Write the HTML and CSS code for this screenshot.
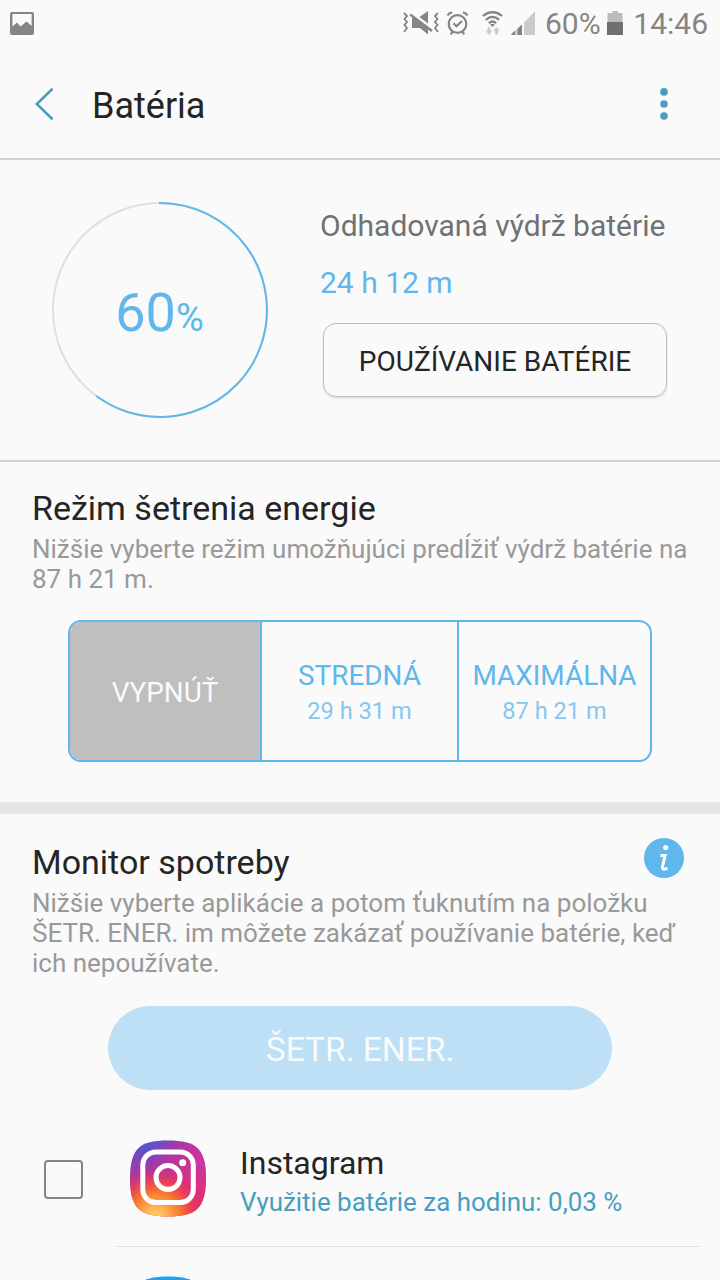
FILE: index.html
```html
<!DOCTYPE html>
<html lang="sk">
<head>
<meta charset="utf-8">
<title>Batéria</title>
<link rel="stylesheet" href="styles.css">
</head>
<body>
<div class="screen">
  <div class="status">
    <svg class="status-picture" width="24" height="23" viewBox="0 0 24 23"><path fill="#858585" fill-rule="evenodd" d="M2 0H22Q24 0 24 2V21Q24 23 22 23H2Q0 23 0 21V2Q0 0 2 0ZM2.400 2V14.500L7 10.500L10.500 14.500L16.600 9.500L21.600 14V2Z"/></svg>
    <svg class="status-icons" width="146" height="26" viewBox="0 0 146 26">
      <g fill="none" stroke="#858585" stroke-width="1.800">
        <path d="M1 2L4 5L1.500 8L4 11L1.500 14L4 17L1 21"/>
        <path d="M35 2L32 5L34.500 8L32 11L34.500 14L32 17L35 21"/>
      </g>
      <path fill="#858585" d="M16.500 6L25 0V12.500ZM9 6.500H11.500L29 19.500L25 18.500V23.500L17 17H9Z"/>
      <path d="M7.200 3.500L29 20" stroke="#858585" stroke-width="2.400"/>
      <g fill="none" stroke="#858585" stroke-width="2.200">
        <circle cx="54.500" cy="13" r="8.800"/>
        <path d="M50.500 12.200L53.500 15.200L59 10"/>
        <path d="M44.500 4.500Q46 1.800 49 1.300M60 1.300Q63 1.800 64.500 4.500M49.500 20.500L47.800 23.500M59.500 20.500L61.200 23.500"/>
      </g>
      <g fill="none" stroke="#858585" stroke-width="2.200">
        <path d="M79.800 5Q89.500 -3 99.200 5"/>
        <path d="M82.800 8.800Q89.500 3 96.200 8.800"/>
        <path d="M85.800 12.200Q89.500 8.800 93.200 12.200"/>
      </g>
      <path fill="#858585" d="M87 13.500Q89.500 11.800 92 13.500L89.500 16Z"/>
      <path fill="#cacaca" d="M84.500 16.500H87.500V20H89.200L86 24L82.800 20H84.500ZM92 23.500V20H90.300L93.500 16L96.700 20H95V23.500Z"/>
      <path fill="#858585" d="M108.300 24V23L112.500 19.200V24ZM115 24V17L119 13.400V24Z"/>
      <path fill="#a8a8a8" d="M113.600 24V18.200L115 17V24Z"/>
      <path fill="#cacaca" d="M121 24V11.500L132 .3V24Z"/>
    </svg>
    <span class="status-percent">60%</span>
    <svg class="status-battery" width="16" height="24" viewBox="0 0 16 24"><path fill="#bbb" d="M5.500 0H11V2H15.500V11H.5V2H5.500Z"/><path fill="#707070" d="M0 11H16V24H0Z"/></svg>
    <span class="status-time">14:46</span>
  </div>

  <header class="header">
    <svg class="back" width="20" height="34" viewBox="0 0 20 34"><path d="M17.500 1.800L1.800 17L17.500 32.200" fill="none" stroke="#479ebf" stroke-width="2.600"/></svg>
    <h1 class="header-title">Batéria</h1>
    <svg class="more" width="8" height="32" viewBox="0 0 8 32" fill="#479ebf"><circle cx="4" cy="3.900" r="3.800"/><circle cx="4" cy="16" r="3.800"/><circle cx="4" cy="28.100" r="3.800"/></svg>
  </header>

  <section class="summary">
    <div class="ring">
      <svg class="ring-arc" width="216" height="216" viewBox="0 0 216 216" fill="none" stroke-width="2">
        <circle cx="108" cy="108" r="107" stroke="#dfdfdf"/>
        <path d="M107 1H108A107 107 0 1 1 44.300 194" stroke="#60b7ec"/>
      </svg>
      <div class="ring-label">60<span class="ring-sign">%</span></div>
    </div>
    <div class="estimate">
      <div class="estimate-label">Odhadovaná výdrž batérie</div>
      <div class="estimate-value">24 h 12 m</div>
      <button class="usage">POUŽÍVANIE BATÉRIE</button>
    </div>
  </section>

  <section class="saving">
    <h2 class="title">Režim šetrenia energie</h2>
    <p class="text">Nižšie vyberte režim umožňujúci predĺžiť výdrž batérie na<br>87 h 21 m.</p>
    <div class="modes">
      <div class="mode mode-off">VYPNÚŤ</div>
      <div class="mode">STREDNÁ<span class="mode-time">29 h 31 m</span></div>
      <div class="mode">MAXIMÁLNA<span class="mode-time">87 h 21 m</span></div>
    </div>
  </section>

  <section class="monitor">
    <div class="monitor-head">
      <h2 class="title">Monitor spotreby</h2>
      <svg class="info" width="40" height="40" viewBox="0 0 40 40"><circle cx="20" cy="20" r="20" fill="#60b7ec"/><circle cx="21.700" cy="9.500" r="2.600" fill="#fff"/><path d="M16.500 17.500H21L18.500 28.500Q18 31.400 20 31.200Q21.800 31 23.300 30" fill="none" stroke="#fff" stroke-width="3"/></svg>
    </div>
    <p class="text">Nižšie vyberte aplikácie a potom ťuknutím na položku<br>ŠETR. ENER. im môžete zakázať používanie batérie, keď<br>ich nepoužívate.</p>
    <button class="save">ŠETR. ENER.</button>
  </section>

  <div class="app">
    <span class="checkbox"></span>
    <svg class="app-icon" width="78" height="78" viewBox="0 0 78 78">
      <defs>
        <linearGradient id="igBase" x1=".25" y1="0" x2=".75" y2="1"><stop offset="0" stop-color="#7048c4"/><stop offset=".35" stop-color="#b0369c"/><stop offset=".65" stop-color="#dd2f72"/><stop offset="1" stop-color="#e03560"/></linearGradient>
        <radialGradient id="igWarm" cx=".34" cy="1" r=".65"><stop offset="0" stop-color="#ffd06a"/><stop offset=".2" stop-color="#fdb456"/><stop offset=".5" stop-color="#f9772d"/><stop offset=".75" stop-color="#ed4250" stop-opacity=".75"/><stop offset="1" stop-color="#d82e75" stop-opacity="0"/></radialGradient>
        <radialGradient id="igCool" cx=".2" cy="0" r=".35"><stop offset="0" stop-color="#485fd4"/><stop offset="1" stop-color="#7048c4" stop-opacity="0"/></radialGradient>
        <radialGradient id="igPink" cx="1" cy=".3" r=".6"><stop offset="0" stop-color="#c837aa"/><stop offset="1" stop-color="#d83080" stop-opacity="0"/></radialGradient>
        <path id="igShape" d="M39 1C67 1 77 9 77 39S67 77 39 77S1 69 1 39S11 1 39 1Z"/>
      </defs>
      <g transform="translate(0 .5)">
        <use href="#igShape" fill="url(#igBase)"/><use href="#igShape" fill="url(#igPink)"/><use href="#igShape" fill="url(#igCool)"/><use href="#igShape" fill="url(#igWarm)"/>
        <g fill="none" stroke="#fff" stroke-width="5"><rect x="13.800" y="12.500" width="50.500" height="50.500" rx="13"/><circle cx="39" cy="38" r="12"/></g>
        <circle cx="53.700" cy="23.300" r="3.500" fill="#fff"/>
      </g>
    </svg>
    <div class="app-info">
      <div class="app-name">Instagram</div>
      <div class="app-usage">Využitie batérie za hodinu: 0,03 %</div>
    </div>
  </div>
  <div class="divider"></div>
  <div class="next-app">
    <svg class="next-icon" width="78" height="78" viewBox="0 0 78 78"><path fill="#1da1f2" d="M39 .5C67 .5 77 8.500 77 38.500S67 77 39 77S1 68.500 1 38.500S11 .5 39 .5Z"/></svg>
  </div>
</div>
</body>
</html>
```

FILE: styles.css
```css
* { box-sizing: border-box; }

body {
  margin: 0;
  background: #fafafa;
  color: #252525;
  font-family: Roboto, "Noto Sans", sans-serif;
}

h1, h2, p { margin: 0; font-weight: 400; }
svg { display: block; flex: none; }
button { font-family: inherit; padding: 0; background: none; }

.screen { width: 720px; height: 1280px; overflow: hidden; }

.status {
  display: flex;
  height: 48px;
  padding: 0 12px 0 10px;
  color: #858585;
  font-size: 30px;
  line-height: 48px;
  white-space: nowrap;
}
.status-picture { margin-top: 12px; }
.status-icons { margin: 11px 0 0 369px; }
.status-percent { width: 58px; margin-left: -4px; }
.status-battery { margin: 11px 0 0 4px; }
.status-time { margin-left: auto; }

.header {
  display: flex;
  align-items: center;
  height: 112px;
  padding: 2px 52px 0 35px;
  border-bottom: 2px solid #d3d3d3;
}
.header-title { flex: 1; padding: 3px 0 0 37px; font-size: 36px; line-height: 44px; }

.summary {
  display: flex;
  height: 302px;
  padding: 42px 53px 0 52px;
  border-bottom: 2px solid #d3d3d3;
}
.ring { display: grid; width: 216px; height: 216px; }
.ring-arc, .ring-label { grid-area: 1 / 1; }
.ring-label {
  padding: 3px 1px 0 0;
  color: #60b7ec;
  font-size: 54px;
  line-height: 216px;
  text-align: center;
}
.ring-sign { font-size: 38px; }
.estimate { width: 347px; margin: 6px 0 0 52px; white-space: nowrap; }
.estimate-label { color: #6f7274; font-size: 30px; line-height: 36px; }
.estimate-value { margin-top: 21px; color: #60b7ec; font-size: 30px; line-height: 36px; }
.usage {
  display: block;
  width: 344px;
  height: 74px;
  margin: 22px 0 0 3px;
  padding-top: 2px;
  border: 1px solid #bdbdbd;
  border-radius: 13px;
  box-shadow: 0 1px 2px rgba(0, 0, 0, .15);
  color: #252525;
  font-size: 28px;
}

.title { font-size: 34px; line-height: 40px; }
.text { color: #999; font-size: 26px; line-height: 30px; white-space: nowrap; }

.saving {
  height: 352px;
  padding: 26px 32px 0;
  border-bottom: 12px solid #e5e5e5;
}
.saving .text { margin-top: 6px; }
.modes {
  display: grid;
  grid-template-columns: 190px 197px 1fr;
  width: 584px;
  height: 142px;
  margin: 26px 0 0 36px;
  overflow: hidden;
  border: 2px solid #60b7ec;
  border-radius: 13px;
}
.mode {
  display: flex;
  flex-direction: column;
  align-items: center;
  justify-content: center;
  padding-top: 4px;
  color: #60b7ec;
  font-size: 27.9px;
  line-height: 36px;
}
.mode + .mode { border-left: 2px solid #60b7ec; }
.mode-off { background: #bfbfbf; color: #fafafa; }
.mode-time { color: #87c7ef; font-size: 23.6px; line-height: 34px; }

.monitor { height: 276px; padding: 24px 32px 0; }
.monitor-head { display: flex; justify-content: space-between; height: 50px; padding-right: 4px; }
.monitor-head .title { padding-top: 4px; }
.save {
  display: block;
  width: 504px;
  height: 84px;
  margin: 28px 0 0 76px;
  padding-top: 2px;
  border: 0;
  border-radius: 42px;
  background: #bde0f6;
  color: #fafafa;
  font-size: 33.5px;
}

.app { display: flex; height: 156px; padding: 49px 20px 0 44px; white-space: nowrap; }
.checkbox { width: 39px; height: 39px; margin-top: 21px; border: 2px solid #858585; border-radius: 4px; }
.app-icon { margin-left: 46px; }
.app-info { margin: 5px 0 0 33px; }
.app-name { font-size: 32px; line-height: 38px; }
.app-usage { margin-top: 4px; color: #479ebf; font-size: 25.95px; line-height: 32px; }
.divider { height: 1px; margin: 0 20px 0 116px; background: #e2e2e2; }
.next-app { height: 33px; padding: 29px 0 0 129px; overflow: hidden; }
```
